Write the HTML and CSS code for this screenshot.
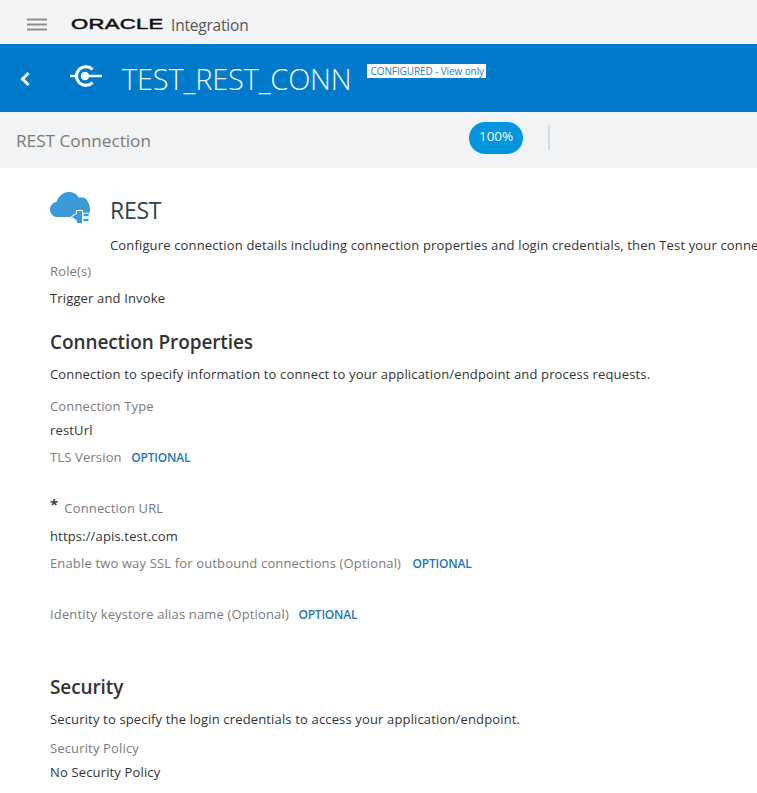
FILE: index.html
```html
<!DOCTYPE html>
<html lang="en">
<head>
<meta charset="utf-8">
<title>TEST_REST_CONN</title>
<link rel="stylesheet" href="styles.css">
</head>
<body>
<header class="topbar">
  <svg class="menu" width="20" height="13" viewBox="0 0 20 13"><path d="M0 1.500h20M0 6.500h20M0 11.500h20" stroke="#8c8c8c" stroke-width="2"/></svg>
  <span class="oracle">ORACLE</span>
  <span class="product">Integration</span>
</header>
<section class="titlebar">
  <svg class="back" width="12" height="16" viewBox="0 0 12 16"><path d="M9.500 2 L3.500 8 L9.500 14" fill="none" stroke="#fff" stroke-width="3"/></svg>
  <svg class="conn" width="33" height="22" viewBox="0 0 33 22"><g fill="none" stroke="#fff"><path d="M22.500 4.500A9.300 9.300 0 1 0 22.500 17.500" stroke-width="3"/><path d="M0 11h7" stroke-width="2.400"/><path d="M15 11h17" stroke-width="2.400"/></g><circle cx="15" cy="11" r="4.200" fill="#fff"/></svg>
  <h1 class="conn-name">TEST_REST_CONN</h1>
  <span class="badge">CONFIGURED - View only</span>
</section>
<section class="subbar">
  <span class="subtitle">REST Connection</span>
  <span class="pill">100%</span>
  <span class="divider"></span>
</section>
<main class="content">
  <div class="adapter">
    <svg class="cloud" width="40" height="32" viewBox="0 0 40 32"><path d="M7 25C3 25 0 21.500 0 17.500 0 13.500 3 10.500 6.500 10 8 4.500 13 0 19 0c4.500 0 8 2.300 10 6 1-.5 2-.6 3-.6 3 0 5.200 2 5.800 4.700C39 11.500 40 14 40 17c0 4-2 8-6 8z" fill="#3b99d9"/><path d="M22 25l5-3.500V19h5v12h-5v-2.500z" fill="#3b99d9" stroke="#fff" stroke-width="2" paint-order="stroke"/><path d="M33 23h5.500M33 28h5.500" stroke="#fff" stroke-width="4.500"/><path d="M33.500 23h5M33.500 28h5" stroke="#3b99d9" stroke-width="2.400"/></svg>
    <div class="adapter-text">
      <h2 class="adapter-name">REST</h2>
      <p class="adapter-desc">Configure connection details including connection properties and login credentials, then Test your connection.</p>
    </div>
  </div>
  <div class="label role-label">Role(s)</div>
  <div class="value role-value">Trigger and Invoke</div>
  <h3 class="section-title props">Connection Properties</h3>
  <p class="value section-desc">Connection to specify information to connect to your application/endpoint and process requests.</p>
  <div class="label type-label">Connection Type</div>
  <div class="value type-value">restUrl</div>
  <div class="label tls">TLS Version <span class="optional">OPTIONAL</span></div>
  <div class="label url-label"><span class="req">*</span>Connection URL</div>
  <div class="value url-value">https://apis.test.com</div>
  <div class="label ssl">Enable two way SSL for outbound connections (Optional) <span class="optional">OPTIONAL</span></div>
  <div class="label alias">Identity keystore alias name (Optional) <span class="optional">OPTIONAL</span></div>
  <h3 class="section-title security">Security</h3>
  <p class="value section-desc">Security to specify the login credentials to access your application/endpoint.</p>
  <div class="label policy-label">Security Policy</div>
  <div class="value policy-value">No Security Policy</div>
</main>
</body>
</html>
```
FILE: styles.css
```css
html, body { margin: 0; padding: 0; height: 793px; overflow: hidden; background: #fff; }
body { font-family: "Open Sans", "Noto Sans", sans-serif; font-size: 13px; letter-spacing: .15px; color: #333; white-space: nowrap; }
h1, h2, h3, p { margin: 0; font-weight: 400; }

.topbar { height: 44px; background: #f3f4f6; display: flex; align-items: center; padding-left: 27px; }
.menu { margin: 4px 24px 0 0; flex: none; }
.oracle { font-family: "Liberation Sans", sans-serif; font-weight: 400; font-size: 15px; letter-spacing: .2px; color: #111; -webkit-text-stroke: .5px #111; width: 100px; transform: scaleX(1.47); transform-origin: left; margin-top: 3px; }
.product { font-size: 15.500px; color: #555; letter-spacing: -.2px; margin-top: 6px; }

.titlebar { height: 68px; background: #017acb; display: flex; align-items: flex-start; }
.back { margin: 27px 0 0 19px; flex: none; }
.conn { margin: 21px 0 0 39px; flex: none; }
.conn-name { font-size: 29px; line-height: 38px; color: #f2f9fd; margin: 16px 0 0 19px; letter-spacing: -.2px; font-weight: 300; }
.badge { background: #fff; color: #1f7fc8; font-size: 10px; line-height: 14px; height: 14px; padding: 0 2px 0 4px; margin: 20px 0 0 15px; letter-spacing: -.1px; }

.subbar { height: 56px; background: #f2f3f5; display: flex; align-items: center; padding-left: 16px; }
.subtitle { font-size: 17.200px; color: #7b7b7b; width: 453px; letter-spacing: 0; }
.pill { width: 54px; height: 32px; box-sizing: border-box; padding-bottom: 4px; border-radius: 16px; background: #0095de; color: #fff; font-size: 13.500px; display: flex; align-items: center; justify-content: center; margin-top: -4px; letter-spacing: -.1px; }
.divider { width: 2px; height: 25px; background: #d5dbe0; margin: -5px 0 0 25px; }

.content { padding-left: 50px; }
.adapter { display: flex; padding-top: 24px; height: 63px; }
.cloud { flex: none; }
.adapter-text { margin-left: 20px; }
.adapter-name { font-size: 23px; line-height: 36px; color: #2b4550; letter-spacing: -.3px; }
.adapter-desc { line-height: 20px; color: #333; margin-top: 7px; }

.label { color: #7b7b7b; line-height: 20px; }
.value { color: #333; line-height: 20px; }
.optional { font-size: 12px; font-weight: 600; color: #1f75b8; margin-left: 6px; letter-spacing: -.2px; }
.ssl .optional { margin-left: 8px; }
.section-title { font-size: 19px; line-height: 26px; font-weight: 600; color: #333; letter-spacing: -.1px; }
.req { font-size: 15px; font-weight: 700; margin-right: 6px; color: #2b4550; position: relative; top: -3px; }

.role-label { margin-top: 6px; }
.role-value { margin-top: 7px; }
.props { margin-top: 21px; }
.section-desc { margin-top: 9px; }
.type-label { margin-top: 12px; }
.type-value { margin-top: 4px; }
.tls { margin-top: 7px; }
.url-label { margin-top: 29px; }
.url-value { margin-top: 8px; }
.ssl { margin-top: 7px; }
.alias { margin-top: 30px; }
.security { margin-top: 49px; }
.policy-label { margin-top: 9px; }
.policy-value { margin-top: 4px; }
```
